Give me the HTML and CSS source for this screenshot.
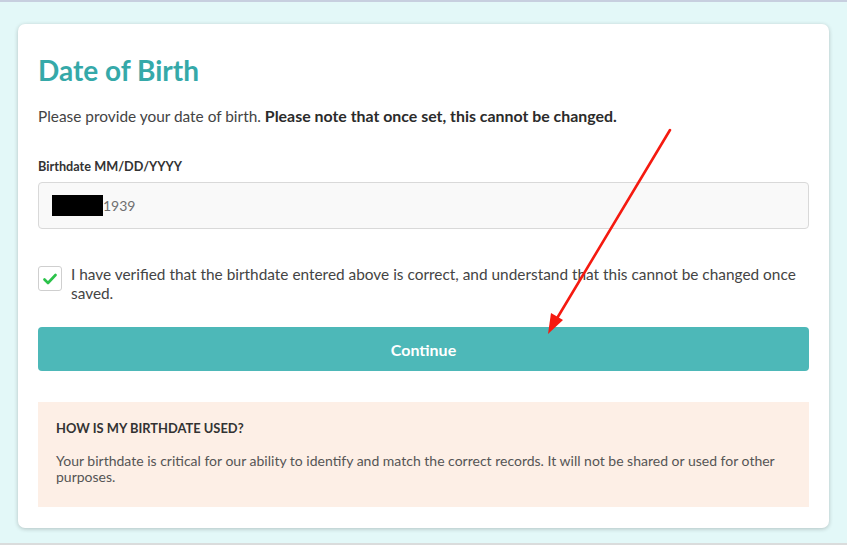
FILE: index.html
```html
<!DOCTYPE html>
<html lang="en">
<head>
<meta charset="utf-8">
<title>Date of Birth</title>
<link rel="stylesheet" href="styles.css">
</head>
<body>
<div class="page">
  <div class="card">
    <h1 class="title">Date of Birth</h1>
    <p class="intro">Please provide your date of birth. <strong>Please note that once set, this cannot be changed.</strong></p>
    <label class="label">Birthdate MM/DD/YYYY</label>
    <div class="input"><span class="redact"></span><span class="year">1939</span></div>
    <div class="check-row">
      <span class="checkbox"><svg width="14" height="12" viewBox="0 0 14 12"><path d="M1.5 6.5 L5 10 L12.5 2" fill="none" stroke="#2bc24a" stroke-width="2.6" stroke-linecap="round" stroke-linejoin="round"/></svg></span>
      <span class="check-text">I have verified that the birthdate entered above is correct, and understand that this cannot be changed once saved.</span>
    </div>
    <button class="btn">Continue</button>
    <div class="info">
      <div class="info-title">HOW IS MY BIRTHDATE USED?</div>
      <div class="info-body">Your birthdate is critical for our ability to identify and match the correct records. It will not be shared or used for other purposes.</div>
    </div>
  </div>
  <svg class="arrow" width="850" height="550" viewBox="0 0 850 550">
    <line x1="670" y1="130" x2="556" y2="320" stroke="#f51a10" stroke-width="2.6" stroke-linecap="round"/>
    <polygon points="548,334 551,313 563,320" fill="#f51a10"/>
  </svg>
</div>
</body>
</html>
```
FILE: styles.css
```css
* { box-sizing: border-box; }
html, body { margin: 0; padding: 0; background: #ffffff; }
body { font-family: "Source Sans Pro", Lato, "Liberation Sans", sans-serif; color: #444; }
.page {
  position: relative;
  width: 847px;
  height: 545px;
  background: #e3f8f8;
  border-top: 2px solid #c7cfdf;
  border-bottom: 2px solid #dadcdc;
  padding: 22px 0 0 18px;
}
.card {
  width: 811px;
  background: #fff;
  border-radius: 7px;
  box-shadow: 0 1px 4px rgba(0,0,0,0.22);
  padding: 30px 20px 21px 20px;
  display: flex;
  flex-direction: column;
}
.title {
  margin: 0;
  font-size: 28px;
  line-height: 32px;
  font-weight: 700;
  color: #35a9a9;
}
.intro {
  margin: 20px 0 0;
  font-size: 15.4px;
  line-height: 20px;
  color: #444;
}
.intro strong { color: #2b2b2b; font-size: 15.9px; }
.label {
  margin-top: 31px;
  font-size: 12.7px;
  line-height: 18px;
  font-weight: 700;
  color: #333;
}
.input {
  margin-top: 7px;
  height: 47px;
  border: 1px solid #d9d9d9;
  border-radius: 4px;
  background: #f9f9f9;
  display: flex;
  align-items: center;
  padding-left: 13px;
}
.redact { width: 51px; height: 21px; background: #000; }
.year { font-size: 14px; color: #6f6f6f; }
.check-row {
  margin-top: 36px;
  display: flex;
  align-items: flex-start;
  gap: 9px;
}
.checkbox {
  flex: none;
  width: 24px;
  height: 25px;
  margin-top: 1px;
  border: 1px solid #cfcfcf;
  border-radius: 3px;
  background: #fff;
  display: flex;
  align-items: center;
  justify-content: center;
}
.check-text {
  font-size: 15.4px;
  line-height: 19px;
  color: #444;
}
.btn {
  margin-top: 24px;
  height: 44px;
  border: none;
  border-radius: 4px;
  background: #4db8b8;
  color: #fff;
  font-family: inherit;
  font-size: 16px;
  font-weight: 700;
}
.info {
  margin-top: 31px;
  background: #fdefe6;
  padding: 18px 18px 0;
  height: 105px;
}
.info-title {
  font-size: 12.9px;
  font-weight: 700;
  line-height: 16px;
  color: #333;
}
.info-body {
  margin-top: 17px;
  font-size: 14px;
  line-height: 16px;
  color: #555;
}
.arrow { position: absolute; left: 0; top: -2px; pointer-events: none; }
```
